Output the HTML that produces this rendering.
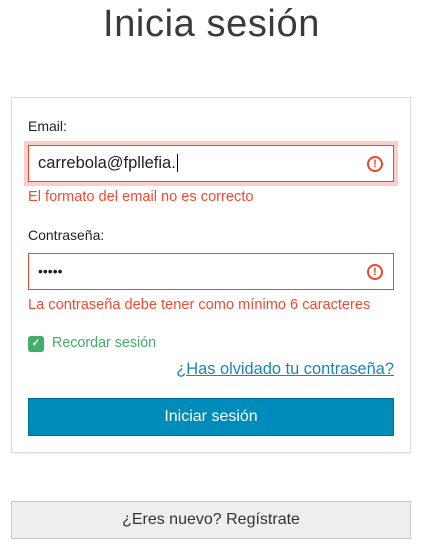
<!DOCTYPE html>
<html><head><meta charset="utf-8"><style>
*{box-sizing:border-box;margin:0;padding:0}
body{width:423px;height:559px;background:#fff;font-family:"Liberation Sans",sans-serif;position:relative;overflow:hidden;color:#222}
.abs{position:absolute}
h1{position:absolute;left:0;width:423px;top:3px;text-align:center;font-weight:normal;font-size:38px;color:#3a3a3a;letter-spacing:0.6px}
.card{left:11px;top:97px;width:400px;height:356px;border:1px solid #ddd;box-shadow:0 1px 2px rgba(0,0,0,.08)}
.lbl{font-size:14px;color:#222}
.inp{left:28px;width:366px;height:37px;border:1px solid #e8472c;background:#fff;font-size:16.5px;padding-left:9px;line-height:35px}
.err{font-size:14.6px;color:#ee4a33;left:28px}
.ic{position:absolute;right:10px;top:10px;width:16px;height:16px;border:2px solid #e8472c;border-radius:50%;color:#e8472c;font-size:11px;font-weight:bold;text-align:center;line-height:12px}
</style></head><body>
<h1>Inicia sesión</h1>
<div class="abs card"></div>
<div class="abs lbl" style="left:28px;top:118px">Email:</div>
<div class="abs" style="left:24px;top:141px;width:374px;height:45px;background:#f8cfc9"></div>
<div class="abs inp" style="top:145px">carrebola@fpllefia.<span style="border-left:1px solid #000;margin-left:1px"></span><div class="ic">!</div></div>
<div class="abs err" style="top:189px">El formato del email no es correcto</div>
<div class="abs lbl" style="left:28px;top:227px">Contraseña:</div>
<div class="abs inp" style="top:253px;font-size:14px;letter-spacing:0px">•••••<div class="ic">!</div></div>
<div class="abs err" style="top:297px">La contraseña debe tener como mínimo 6 caracteres</div>
<div class="abs" style="left:28px;top:336px;width:16px;height:16px;background:#43ac6a;border-radius:3px;color:#fff;font-size:10px;text-align:center;line-height:16px;font-weight:bold">✓</div>
<div class="abs" style="left:52px;top:335px;font-size:14.3px;color:#43ac6a">Recordar sesión</div>
<div class="abs" style="right:29px;top:360px;font-size:16.4px;color:#1a86b8;text-decoration:underline">¿Has olvidado tu contraseña?</div>
<div class="abs" style="left:28px;top:398px;width:366px;height:38px;background:#008cba;border:1px solid #007095;color:#fff;font-size:16px;text-align:center;line-height:36px">Iniciar sesión</div>
<div class="abs" style="left:11px;top:501px;width:400px;height:38px;background:#eee;border:1px solid #ccc;color:#333;font-size:16px;text-align:center;line-height:36px">¿Eres nuevo? Regístrate</div>
</body></html>
